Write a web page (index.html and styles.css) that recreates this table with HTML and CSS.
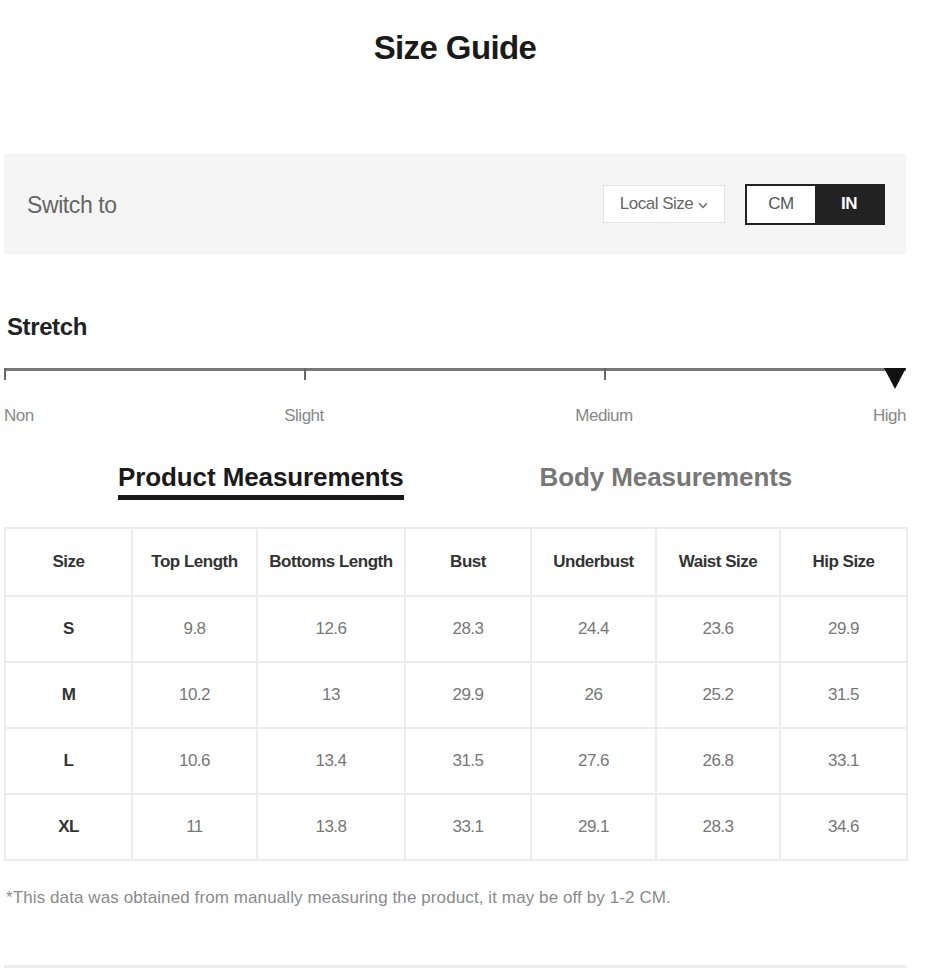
FILE: index.html
```html
<!DOCTYPE html>
<html lang="en">
<head>
<meta charset="utf-8">
<title>Size Guide</title>
<link rel="stylesheet" href="styles.css">
</head>
<body>
<div class="page">
  <h1 class="title">Size Guide</h1>

  <div class="switch-bar">
    <span class="switch-label">Switch to</span>
    <div class="switch-controls">
      <div class="local-size">Local Size <svg class="chev" width="10" height="7" viewBox="0 0 10 7"><path d="M1 1.2 L5 5.5 L9 1.2" fill="none" stroke="#666" stroke-width="1.3"/></svg></div>
      <div class="unit-toggle">
        <span class="unit">CM</span>
        <span class="unit active">IN</span>
      </div>
    </div>
  </div>

  <h2 class="stretch-title">Stretch</h2>
  <div class="scale">
    <div class="scale-line">
      <span class="tick"></span>
      <span class="tick"></span>
      <span class="tick"></span>
      <span class="marker"></span>
    </div>
    <div class="scale-labels">
      <span class="lbl-non">Non</span>
      <span class="lbl-slight">Slight</span>
      <span class="lbl-medium">Medium</span>
      <span class="lbl-high">High</span>
    </div>
  </div>

  <div class="tabs">
    <span class="tab active">Product Measurements</span>
    <span class="tab">Body Measurements</span>
  </div>

  <table class="size-table">
    <colgroup>
      <col class="c1"><col class="c2"><col class="c3"><col class="c4"><col class="c5"><col class="c6"><col class="c7">
    </colgroup>
    <thead>
      <tr><th>Size</th><th>Top Length</th><th>Bottoms Length</th><th>Bust</th><th>Underbust</th><th>Waist Size</th><th>Hip Size</th></tr>
    </thead>
    <tbody>
      <tr><th>S</th><td>9.8</td><td>12.6</td><td>28.3</td><td>24.4</td><td>23.6</td><td>29.9</td></tr>
      <tr><th>M</th><td>10.2</td><td>13</td><td>29.9</td><td>26</td><td>25.2</td><td>31.5</td></tr>
      <tr><th>L</th><td>10.6</td><td>13.4</td><td>31.5</td><td>27.6</td><td>26.8</td><td>33.1</td></tr>
      <tr><th>XL</th><td>11</td><td>13.8</td><td>33.1</td><td>29.1</td><td>28.3</td><td>34.6</td></tr>
    </tbody>
  </table>

  <p class="note">*This data was obtained from manually measuring the product, it may be off by 1-2 CM.</p>

  <div class="bottom-rule"></div>
</div>
</body>
</html>
```
FILE: styles.css
```css
* { box-sizing: border-box; }
html, body { margin: 0; padding: 0; background: #fff; }
body {
  font-family: "Liberation Sans", Arial, sans-serif;
  color: #222;
}
.page {
  width: 902px;
  margin-left: 4px;
}
.title {
  margin: 0;
  padding-top: 28px;
  height: 154px;
  text-align: center;
  font-size: 33px;
  font-weight: bold;
  letter-spacing: -0.6px;
  line-height: 40px;
  color: #1a1a1a;
}
.switch-bar {
  height: 100px;
  background: #f5f5f5;
  display: flex;
  align-items: center;
  justify-content: space-between;
  padding: 0 21px 0 23px;
}
.switch-label {
  font-size: 23px;
  color: #666;
  letter-spacing: -0.4px;
  padding-top: 2px;
}
.switch-controls {
  display: flex;
  align-items: center;
  gap: 20px;
}
.local-size {
  width: 122px;
  height: 38px;
  background: #fff;
  border: 1px solid #e6e6e6;
  display: flex;
  align-items: center;
  justify-content: center;
  gap: 5px;
  font-size: 17px;
  color: #666;
  letter-spacing: -0.5px;
}
.chev { margin-top: 3px; }
.unit-toggle {
  display: flex;
  width: 140px;
  height: 41px;
  border: 2px solid #222;
}
.unit {
  flex: 1;
  display: flex;
  align-items: center;
  justify-content: center;
  font-size: 17px;
  color: #555;
  background: #fff;
  letter-spacing: -0.5px;
}
.unit.active {
  background: #222;
  color: #fff;
  font-weight: bold;
}
.stretch-title {
  margin: 0;
  padding-top: 58px;
  height: 114px;
  font-size: 24px;
  font-weight: bold;
  line-height: 30px;
  color: #222;
  padding-left: 3px;
  letter-spacing: -0.4px;
}
.scale { position: relative; }
.scale-line {
  position: relative;
  height: 3px;
  background: #777;
  display: flex;
  justify-content: space-between;
  padding: 0 300px 0 0;
}
.tick {
  width: 2px;
  height: 12px;
  background: #666;
}
.marker {
  position: absolute;
  right: 0;
  top: 0;
  width: 0;
  height: 0;
  border-left: 11px solid transparent;
  border-right: 11px solid transparent;
  border-top: 21px solid #111;
}
.scale-labels {
  display: grid;
  grid-template-columns: 150px 300px 300px 1fr;
  padding-top: 35px;
  font-size: 17px;
  color: #888;
  letter-spacing: -0.5px;
  line-height: 20px;
}
.lbl-non { justify-self: start; }
.lbl-slight, .lbl-medium { justify-self: center; }
.lbl-high { justify-self: end; }
.tabs {
  display: flex;
  padding-top: 34px;
  height: 101px;
}
.tab {
  font-size: 26px;
  font-weight: bold;
  color: #777;
  letter-spacing: -0.1px;
  line-height: 34px;
  height: 40px;
}
.tab.active {
  color: #1a1a1a;
  margin-left: 114px;
  margin-right: 136px;
  border-bottom: 5px solid #1a1a1a;
}
.size-table {
  width: 902px;
  border-collapse: collapse;
  table-layout: fixed;
}
.c1 { width: 127px; }
.c2 { width: 125px; }
.c3 { width: 148px; }
.c4 { width: 126px; }
.c5 { width: 125px; }
.c6 { width: 124px; }
.c7 { width: 127px; }
.size-table th, .size-table td {
  border: 2px solid #ececec;
  text-align: center;
  font-size: 17px;
  letter-spacing: -0.5px;
}
.size-table thead th {
  height: 68px;
  color: #333;
  font-weight: bold;
}
.size-table tbody tr { height: 66px; }
.size-table tbody th {
  color: #333;
  font-weight: bold;
}
.size-table td { color: #777; }
.note {
  margin: 0;
  padding-top: 27px;
  padding-left: 2px;
  font-size: 17px;
  color: #8a8a8a;
  letter-spacing: 0.1px;
  height: 104px;
}
.bottom-rule {
  height: 3px;
  background: #eee;
}
```
